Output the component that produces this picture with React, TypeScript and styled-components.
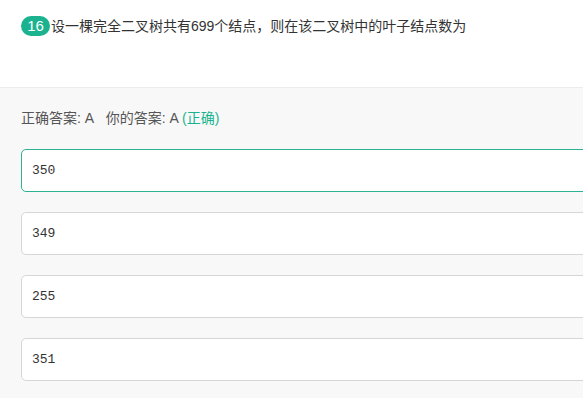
import React from 'react'
import styled, { createGlobalStyle } from 'styled-components'

const GlobalStyle = createGlobalStyle`
  html, body {
    margin: 0;
    padding: 0;
    background: #f8f8f8;
    overflow: hidden;
  }
  body {
    font-family: "Liberation Sans", "Noto Sans CJK SC", sans-serif;
    color: #333;
  }
`

const Page = styled.div`
  width: 583px;
  height: 398px;
  overflow: hidden;
`

const Question = styled.div`
  background: #fff;
  height: 88px;
  box-sizing: border-box;
  border-bottom: 1px solid #ececec;
  padding: 16px 21px 0;
  display: flex;
  align-items: flex-start;
  font-size: 14px;
  line-height: 20px;
`

const Badge = styled.span`
  display: inline-flex;
  align-items: center;
  justify-content: center;
  min-width: 29px;
  height: 20px;
  padding: 0 4px;
  box-sizing: border-box;
  border-radius: 10px;
  background: #1bb38f;
  color: #fff;
  font-size: 15px;
  margin-right: 1px;
`

const Body = styled.div`
  background: #f8f8f8;
  padding: 20px 0 0 21px;
`

const Result = styled.div`
  font-size: 14px;
  line-height: 20px;
  color: #555;
  margin-bottom: 21px;
`

const Status = styled.span`
  color: #1bb38f;
`

const Options = styled.div`
  display: flex;
  flex-direction: column;
  gap: 20px;
`

const Option = styled.div<{ $selected?: boolean }>`
  width: 700px;
  height: 43px;
  box-sizing: border-box;
  background: #fff;
  border: 1px solid ${p => (p.$selected ? '#2db294' : '#d6d6d6')};
  border-radius: 5px;
  display: flex;
  align-items: center;
  padding-left: 10px;
  font-family: "Liberation Mono", "DejaVu Sans Mono", monospace;
  font-size: 13px;
  color: #333;
`

const options = ['350', '349', '255', '351']

export default function App() {
  return (
    <Page>
      <GlobalStyle />
      <Question>
        <Badge>16</Badge>
        <span>设一棵完全二叉树共有699个结点，则在该二叉树中的叶子结点数为</span>
      </Question>
      <Body>
        <Result>
          正确答案: A&nbsp;&nbsp;&nbsp;你的答案: A <Status>(正确)</Status>
        </Result>
        <Options>
          {options.map((o, i) => (
            <Option key={o} $selected={i === 0}>
              {o}
            </Option>
          ))}
        </Options>
      </Body>
    </Page>
  )
}
